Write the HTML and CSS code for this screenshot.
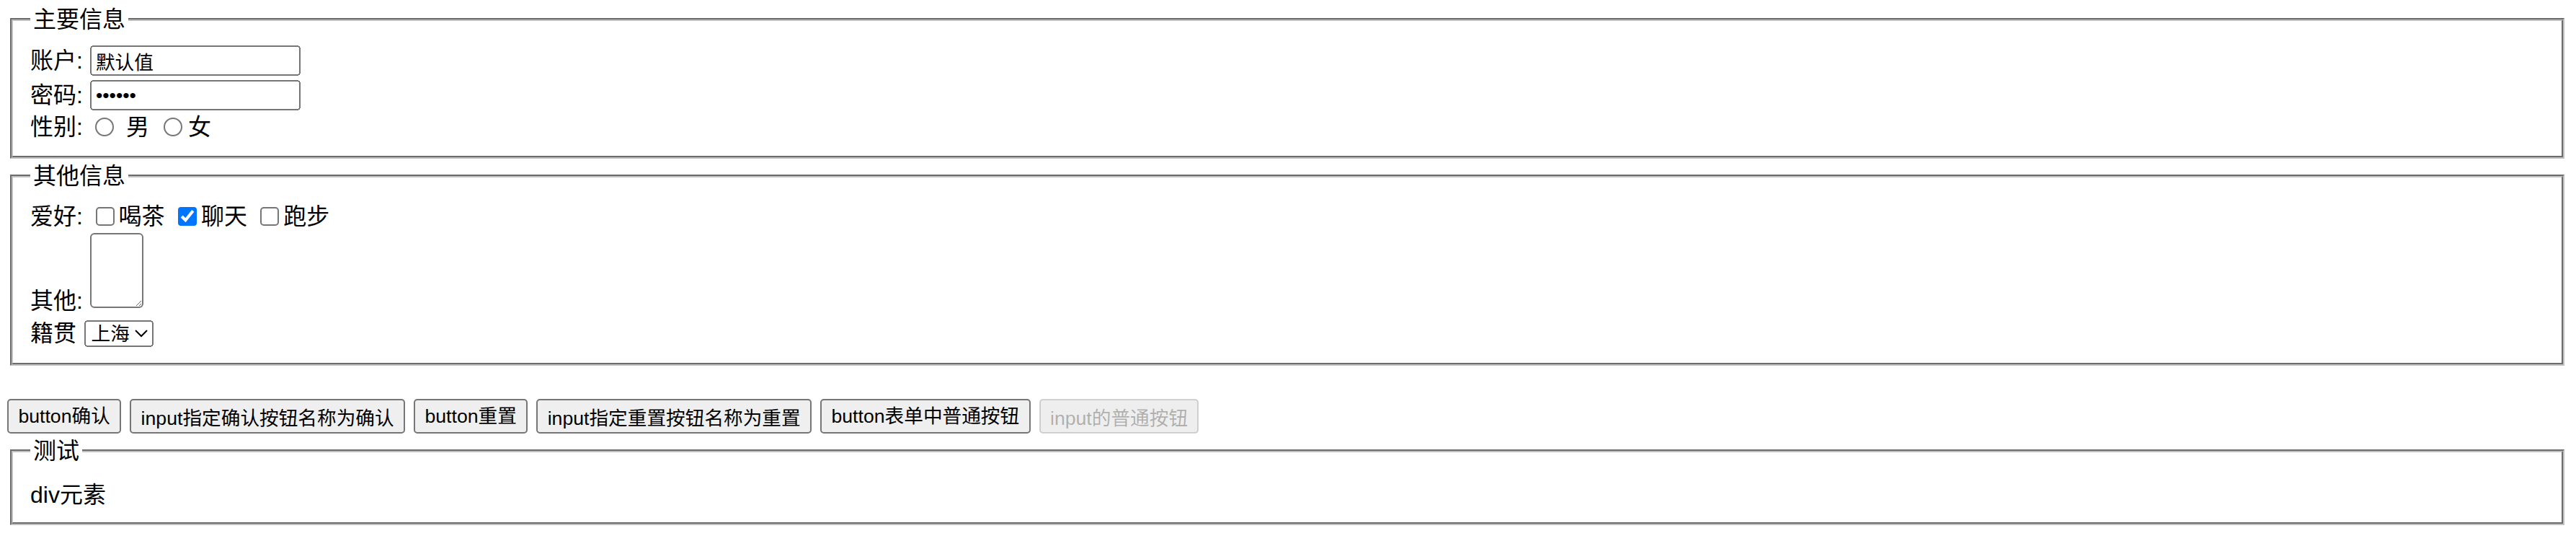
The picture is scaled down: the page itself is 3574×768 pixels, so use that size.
FILE: index.html
```html
<!DOCTYPE html>
<html lang="zh-CN">
<head>
<meta charset="utf-8">
<title>表单</title>
<link rel="stylesheet" href="styles.css">
</head>
<body>
<form class="page">
  <fieldset class="group">
    <legend>主要信息</legend>
    <div class="row row-input">
      <label class="lbl" for="acc">账户:</label>
      <input id="acc" class="text" type="text" value="默认值">
    </div>
    <div class="row row-input">
      <label class="lbl" for="pwd">密码:</label>
      <input id="pwd" class="text" type="password" value="123456">
    </div>
    <div class="row row-radio">
      <span class="lbl">性别:</span>
      <input class="radio radio-m" type="radio" name="sex" id="sex-m">
      <label for="sex-m">男</label>
      <input class="radio radio-f" type="radio" name="sex" id="sex-f">
      <label for="sex-f">女</label>
    </div>
  </fieldset>

  <fieldset class="group group-other">
    <legend>其他信息</legend>
    <div class="row row-hobby">
      <span class="lbl">爱好:</span>
      <input class="check check-1" type="checkbox" id="h1"><label for="h1">喝茶</label>
      <input class="check check-2" type="checkbox" id="h2" checked><label for="h2">聊天</label>
      <input class="check check-3" type="checkbox" id="h3"><label for="h3">跑步</label>
    </div>
    <div class="row row-note">
      <label class="lbl lbl-note" for="note">其他:</label>
      <textarea id="note" class="note"></textarea>
    </div>
    <div class="row row-city">
      <label class="lbl" for="city">籍贯</label>
      <select id="city" class="city">
        <option>上海</option>
        <option>北京</option>
      </select>
    </div>
  </fieldset>

  <div class="actions">
    <button type="submit" class="btn btn-1">button确认</button>
    <input type="submit" class="btn btn-2" value="input指定确认按钮名称为确认">
    <button type="reset" class="btn btn-3">button重置</button>
    <input type="reset" class="btn btn-4" value="input指定重置按钮名称为重置">
    <button type="button" class="btn btn-5">button表单中普通按钮</button>
    <input type="button" class="btn btn-6" value="input的普通按钮" disabled>
  </div>

  <fieldset class="group group-test">
    <legend>测试</legend>
    <div class="test-text">div元素</div>
  </fieldset>
</form>
</body>
</html>
```

FILE: styles.css
```css
html {
  zoom: 2;
  background: #fff;
}

body {
  margin: 0;
  padding: 4.5px 6px 0 5px;
  font-family: "Liberation Sans", "Noto Sans CJK SC", sans-serif;
  font-size: 16px;
  line-height: 18px;
  color: #000;
  background: #fff;
}

.page {
  margin: 0;
}

.group {
  margin: 0 2px;
  padding: 7.5px 12px 10px;
  border: 2px groove rgb(192, 192, 192);
  min-width: 0;
}

.group legend {
  padding: 0 2px;
  line-height: 18px;
}

.group-other {
  margin-top: 3px;
}

.row {
  display: flex;
  align-items: center;
  white-space: nowrap;
}

.lbl {
  line-height: 18px;
}

/* text inputs */
.row-input {
  height: 24px;
}

.text {
  box-sizing: border-box;
  width: 146px;
  height: 21px;
  margin: 0 0 0 5px;
  padding: 1px 2px;
  font-family: "Liberation Sans", "Noto Sans CJK SC", sans-serif;
  font-size: 13.33px;
}

/* radios */
.row-radio {
  height: 20px;
}

.radio {
  width: 13px;
  height: 13px;
  margin: 0;
}

.radio-m {
  margin-left: 8.6px;
  margin-right: 8.5px;
}

.radio-f {
  margin-left: 10px;
  margin-right: 4px;
}

/* checkboxes */
.row-hobby {
  height: 23px;
}

.check {
  width: 13px;
  height: 13px;
  margin: 0 3px 0 0;
}

.check-1 {
  margin-left: 8.8px;
}

.check-2 {
  margin-left: 9.3px;
}

.check-3 {
  margin-left: 9px;
}

/* textarea */
.row-note {
  height: 59px;
  align-items: flex-end;
}

.lbl-note {
  margin-bottom: 2.9px;
}

.note {
  box-sizing: border-box;
  width: 37px;
  height: 52px;
  margin: 0 0 6.8px 5px;
  padding: 2px;
  border-radius: 3px;
  font-family: "Liberation Mono", monospace;
  font-size: 13.33px;
}

/* select */
.row-city {
  height: 21px;
}

.city {
  box-sizing: border-box;
  width: 48px;
  height: 18.5px;
  margin: 0 0 0 5.3px;
  font-family: "Liberation Sans", "Noto Sans CJK SC", sans-serif;
  font-size: 13.33px;
}

/* buttons */
.actions {
  display: flex;
  gap: 6px;
  margin-top: 23.2px;
}

.btn {
  box-sizing: border-box;
  height: 24px;
  margin: 0;
  padding: 0 5.7px;
  font-family: "Liberation Sans", "Noto Sans CJK SC", sans-serif;
  font-size: 13.33px;
  line-height: 16px;
}

/* test fieldset */
.group-test {
  margin-top: 3px;
}

.test-text {
  margin-top: 5px;
  line-height: 18px;
}
```
